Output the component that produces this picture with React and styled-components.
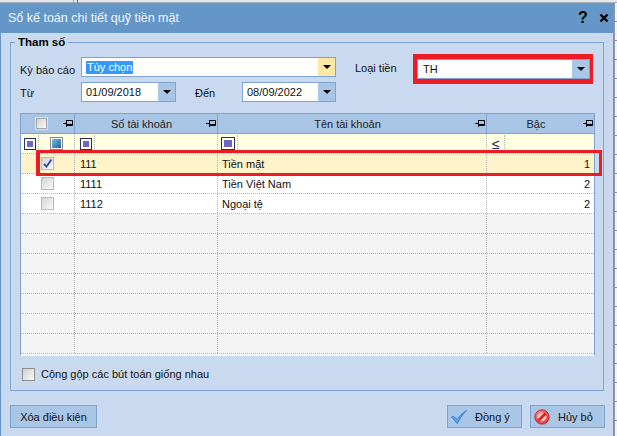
import React from "react";
import styled, { createGlobalStyle } from "styled-components";

const accounts = [
	{ code: "111", name: "Tiền mặt", level: 1, checked: true },
	{ code: "1111", name: "Tiền Việt Nam", level: 2 },
	{ code: "1112", name: "Ngoại tệ", level: 2 },
];

const emptyRows = [0, 1, 2, 3, 4, 5, 6];

const PinIcon = () => (
	<PinSvg width="10" height="7" viewBox="0 0 10 7">
		<path d="M0 3.5H3.5M3.5 0V7M3.5 0.5H9.5V5.5H3.5" fill="none" stroke="#000" />
		<path d="M4 4.5H9" stroke="#000" />
	</PinSvg>
);

const CheckMark = () => (
	<svg width="11" height="11" viewBox="0 0 11 11">
		<path d="M2 6L4.5 8.5L9.5 1.5" fill="none" stroke="#2b4f9e" strokeWidth="1.8" />
	</svg>
);

const OkIcon = () => (
	<svg width="16" height="14" viewBox="0 0 16 14">
		<path d="M0.5 7L2.5 6.2L6 9.8C8 6.5 11.5 3 15.5 0.5C11.5 4.5 9 8.5 6.2 13.5Z" fill="#5aa6ec" stroke="#1f6fc4" strokeWidth="0.7" />
	</svg>
);

const CancelIcon = () => (
	<svg width="16" height="16" viewBox="0 0 17 17">
		<defs>
			<radialGradient id="cancelFill" cx="0.4" cy="0.35" r="0.8">
				<stop offset="0" stopColor="#ff9a9a" />
				<stop offset="1" stopColor="#d8262b" />
			</radialGradient>
		</defs>
		<circle cx="8.5" cy="8.5" r="7.6" fill="url(#cancelFill)" stroke="#b5262a" />
		<circle cx="8.5" cy="8.5" r="4.6" fill="#f8c9c4" />
		<path d="M4.6 12.4L12.4 4.6" stroke="#d8262b" strokeWidth="3" />
	</svg>
);

const App = () => {
	return (
		<Page>
			<GlobalStyle />
			<TopStrip>
				<StripTick />
			</TopStrip>
			<Main>
				<Dialog>
					<TitleBar>
						<Title>Sổ kế toán chi tiết quỹ tiền mặt</Title>
						<HelpButton>?</HelpButton>
						<svg width="10" height="10" viewBox="0 0 10 10">
							<path d="M1.5 1.5L8.5 8.5M8.5 1.5L1.5 8.5" stroke="#000" strokeWidth="2.4" />
						</svg>
					</TitleBar>
					<Body>
						<GroupBox>
							<GroupLegend>Tham số</GroupLegend>
							<FormArea>
								<FormLeft>
									<FormRow>
										<FieldLabel $drop={6}>Kỳ báo cáo</FieldLabel>
										<Combo $width={255}>
											<ComboValue>
												<Selected>Tùy chọn</Selected>
											</ComboValue>
											<ComboButton $active>
												<Arrow />
											</ComboButton>
										</Combo>
									</FormRow>
									<FormRow>
										<FieldLabel $drop={2}>Từ</FieldLabel>
										<Combo $width={95}>
											<ComboValue>01/09/2018</ComboValue>
											<ComboButton>
												<Arrow />
											</ComboButton>
										</Combo>
										<ToLabel>Đến</ToLabel>
										<Combo $width={94}>
											<ComboValue>08/09/2022</ComboValue>
											<ComboButton>
												<Arrow />
											</ComboButton>
										</Combo>
									</FormRow>
								</FormLeft>
								<CurrencyLabel>Loại tiền</CurrencyLabel>
								<RedFrame>
									<Combo $width={173}>
										<ComboValue $pad={5}>TH</ComboValue>
										<ComboButton>
											<Arrow />
										</ComboButton>
									</Combo>
								</RedFrame>
							</FormArea>
							<Table>
								<HeaderRow>
									<HeaderCell>
										<HeaderCheck />
										<PinIcon />
									</HeaderCell>
									<HeaderCell>
										<HeaderText>Số tài khoản</HeaderText>
										<PinIcon />
									</HeaderCell>
									<HeaderCell>
										<HeaderText>Tên tài khoản</HeaderText>
										<PinIcon />
									</HeaderCell>
									<HeaderCell $last>
										<HeaderText>Bậc</HeaderText>
										<PinIcon />
									</HeaderCell>
								</HeaderRow>
								<FilterRow>
									<Cell $pad={3}>
										<FilterMark />
										<FilterDivider />
										<GradientMark />
									</Cell>
									<Cell $pad={5}>
										<FilterMark />
										<FilterDivider />
									</Cell>
									<Cell $pad={3}>
										<FilterMark $big />
										<FilterDivider />
									</Cell>
									<Cell $pad={5} $last>
										<LessEqual>≤</LessEqual>
										<FilterDivider $wide />
									</Cell>
								</FilterRow>
								{accounts.map((account) => (
									<Row key={account.code} $selected={account.checked}>
										<CheckCell>
											<RowCheck>{account.checked && <CheckMark />}</RowCheck>
										</CheckCell>
										<Cell $pad={5}>{account.code}</Cell>
										<Cell $pad={4}>{account.name}</Cell>
										<Cell $pad={4} $right $last>
											{account.level}
										</Cell>
									</Row>
								))}
								{emptyRows.map((item) => (
									<Row key={item} $empty>
										<Cell />
										<Cell />
										<Cell />
										<Cell $last />
									</Row>
								))}
								<RowHighlight />
							</Table>
							<MergeRow>
								<MergeCheck />
								Cộng gộp các bút toán giống nhau
							</MergeRow>
						</GroupBox>
						<Footer>
							<FooterButton $width={87}>Xóa điều kiện</FooterButton>
							<FooterRight>
								<FooterButton $width={75} $icon>
									<IconSlot>
										<OkIcon />
									</IconSlot>
									<span>Đồng ý</span>
								</FooterButton>
								<FooterButton $width={75} $icon>
									<IconSlot>
										<CancelIcon />
									</IconSlot>
									<span>Hủy bỏ</span>
								</FooterButton>
							</FooterRight>
						</Footer>
					</Body>
				</Dialog>
				<BackEdge />
			</Main>
		</Page>
	);
};

const GlobalStyle = createGlobalStyle`
	html, body {
		margin: 0;
		padding: 0;
		overflow: hidden;
	}
	* {
		box-sizing: border-box;
	}
`;

const Page = styled.div`
	width: 617px;
	height: 436px;
	display: flex;
	flex-direction: column;
	overflow: hidden;
	background: #f4f6f8;
	font-family: "Liberation Sans", Arial, sans-serif;
	font-size: 11px;
	color: #111;
`;

const TopStrip = styled.div`
	height: 3px;
	flex: none;
	display: flex;
	background: #e4e8ec;
	border-bottom: 1px solid #a9b4c0;
`;

const StripTick = styled.div`
	width: 5px;
	height: 3px;
	margin-left: 73px;
	border-left: 1px solid #8b97a5;
	border-right: 1px solid #5d6a7a;
`;

const Main = styled.div`
	flex: 1;
	display: flex;
	min-height: 0;
`;

const Dialog = styled.div`
	width: 614px;
	display: flex;
	flex-direction: column;
	border-left: 1px solid #6497c8;
	border-right: 1px solid #6497c8;
	background: #c9daf0;
`;

const BackEdge = styled.div`
	flex: 1;
	border-left: 1px solid #8f9bab;
	background: repeating-linear-gradient(
		to bottom,
		#f1f3f6 0,
		#f1f3f6 18px,
		#8a94a0 18px,
		#8a94a0 19px
	);
`;

const TitleBar = styled.div`
	height: 30px;
	flex: none;
	display: flex;
	align-items: center;
	padding: 0 4px 0 7px;
	background: #6497c8;
`;

const Title = styled.div`
	flex: 1;
	font-size: 12.5px;
	color: #f2f6fb;
`;

const HelpButton = styled.div`
	width: 12px;
	margin-right: 10px;
	font-size: 16px;
	font-weight: bold;
	color: #000;
	text-align: center;
`;

const Body = styled.div`
	flex: 1;
	display: flex;
	flex-direction: column;
	padding: 2px 9px 0;
`;

const GroupBox = styled.fieldset`
	height: 356px;
	margin: 0;
	padding: 5px 8px 0 9px;
	min-width: 0;
	border: 1px solid #7fa3d1;
`;

const GroupLegend = styled.legend`
	height: 14px;
	margin-left: -5px;
	padding: 0 3px;
	font-size: 11.5px;
	line-height: 14px;
	font-weight: bold;
	color: #000;
`;

const FormArea = styled.div`
	display: flex;
	align-items: flex-start;
`;

const FormLeft = styled.div`
	width: 316px;
	margin-top: 3px;
	display: flex;
	flex-direction: column;
	gap: 5px;
`;

const FormRow = styled.div`
	height: 20px;
	display: flex;
	align-items: center;
`;

const FieldLabel = styled.div`
	width: 61px;
	padding-top: ${({ $drop }) => $drop}px;
`;

const ToLabel = styled.div`
	width: 47px;
	margin-left: 19px;
	padding-top: 2px;
`;

const CurrencyLabel = styled.div`
	width: 58px;
	margin: 8px 0 0 19px;
`;

const RedFrame = styled.div`
	width: 180px;
	height: 30px;
	border-style: solid;
	border-color: #ed1c24;
	border-width: 5px 3px 5px 4px;
`;

const Combo = styled.div`
	width: ${({ $width }) => $width}px;
	height: 20px;
	flex: none;
	display: flex;
	border: 1px solid #7fa3d1;
	background: #fff;
`;

const ComboValue = styled.div`
	flex: 1;
	display: flex;
	align-items: center;
	padding-left: ${({ $pad }) => $pad || 4}px;
	color: #111;
`;

const Selected = styled.span`
	padding: 0 1px;
	line-height: 13px;
	background: #3399ff;
	color: #fff;
`;

const ComboButton = styled.div`
	width: 17px;
	display: flex;
	align-items: center;
	justify-content: center;
	background: ${({ $active }) => ($active ? "#ffe8a6" : "#aac6e6")};
`;

const Arrow = styled.span`
	width: 0;
	height: 0;
	border-left: 4px solid transparent;
	border-right: 4px solid transparent;
	border-top: 4px solid #000;
`;

const Table = styled.div`
	position: relative;
	height: 243px;
	margin-top: 11px;
	border: 1px solid #7fa3d1;
	border-bottom-color: #ffffff;
	background: #f4f4f4;
`;

const columns = "54px 143px 269px 107px";

const HeaderRow = styled.div`
	display: grid;
	grid-template-columns: ${columns};
	height: 20px;
	background: #a9c5e6;
	border-bottom: 1px solid #7fa3d1;
`;

const HeaderCell = styled.div`
	position: relative;
	display: flex;
	align-items: center;
	justify-content: center;
	padding-right: 9px;
	border-right: ${({ $last }) => ($last ? "none" : "1px solid #7fa3d1")};
`;

const HeaderText = styled.span`
	color: #222;
`;

const PinSvg = styled.svg`
	position: absolute;
	right: 1px;
	top: 6px;
`;

const HeaderCheck = styled.span`
	width: 11px;
	height: 11px;
	margin-right: 3px;
	border: 1px solid #a4a4a4;
	background: linear-gradient(135deg, #d2d2d2, #fafafa);
	outline: 1px solid #d6e2f2;
`;

const FilterRow = styled.div`
	display: grid;
	grid-template-columns: ${columns};
	height: 20px;
	background: #ffffe1;
	border-bottom: 1px dotted #b4b4b4;
`;

const Row = styled.div`
	display: grid;
	grid-template-columns: ${columns};
	height: 20px;
	background: ${({ $selected, $empty }) =>
		$selected ? "#fff3c9" : $empty ? "#f4f4f4" : "#fff"};
	border-bottom: 1px dotted #b4b4b4;
`;

const Cell = styled.div`
	display: flex;
	align-items: center;
	padding-left: ${({ $pad }) => $pad || 0}px;
	padding-right: ${({ $right }) => ($right ? 4 : 0)}px;
	justify-content: ${({ $right }) => ($right ? "flex-end" : "flex-start")};
	border-right: ${({ $last }) => ($last ? "none" : "1px dotted #b4b4b4")};
`;

const CheckCell = styled(Cell)`
	padding-left: 20px;
`;

const FilterMark = styled.span`
	width: ${({ $big }) => ($big ? 14 : 12)}px;
	height: ${({ $big }) => ($big ? 13 : 12)}px;
	flex: none;
	border: 1px solid #2d2d66;
	background: #6a66cc;
	box-shadow: inset 0 0 0 2px #fffff0;
`;

const GradientMark = styled.span`
	width: 13px;
	height: 13px;
	flex: none;
	margin-left: 11px;
	border: 1px solid #8a8a8a;
	background: linear-gradient(135deg, #7fc6e2, #0f5f9a);
	box-shadow: inset 0 0 0 1px #ffffff;
`;

const FilterDivider = styled.span`
	width: 1px;
	height: 18px;
	flex: none;
	margin-left: ${({ $wide }) => ($wide ? 4 : 2)}px;
	border-left: 1px dotted #b4b4b4;
`;

const LessEqual = styled.span`
	width: 8px;
	font-size: 14px;
	color: #2d2d66;
`;

const RowCheck = styled.span`
	width: 13px;
	height: 13px;
	display: flex;
	align-items: center;
	justify-content: center;
	border: 1px solid #a9bcd6;
	background: linear-gradient(135deg, #d4d4d4, #fafafa);
`;

const RowHighlight = styled.div`
	position: absolute;
	left: 15px;
	top: 36px;
	width: 566px;
	height: 26px;
	border: 3px solid #ed1c24;
	border-left-width: 4px;
	pointer-events: none;
`;

const MergeRow = styled.div`
	display: flex;
	align-items: center;
	gap: 6px;
	margin: 11px 0 0 2px;
	height: 14px;
`;

const MergeCheck = styled.span`
	width: 13px;
	height: 13px;
	border: 1px solid #8f8f8f;
	background: linear-gradient(135deg, #cfcfcf, #fafafa);
`;

const Footer = styled.div`
	display: flex;
	justify-content: space-between;
	margin: 14px -1px 0 0;
`;

const FooterRight = styled.div`
	display: flex;
	gap: 8px;
`;

const FooterButton = styled.div`
	width: ${({ $width }) => $width}px;
	height: 23px;
	display: flex;
	align-items: center;
	justify-content: ${({ $icon }) => ($icon ? "flex-start" : "center")};
	padding-left: ${({ $icon }) => ($icon ? "3px" : 0)};
	white-space: nowrap;
	background: #aac6e6;
	border: 1px solid #7fa3d1;
	color: #111;
`;

const IconSlot = styled.span`
	width: 24px;
	flex: none;
	display: flex;
	align-items: center;
`;

export default App;
